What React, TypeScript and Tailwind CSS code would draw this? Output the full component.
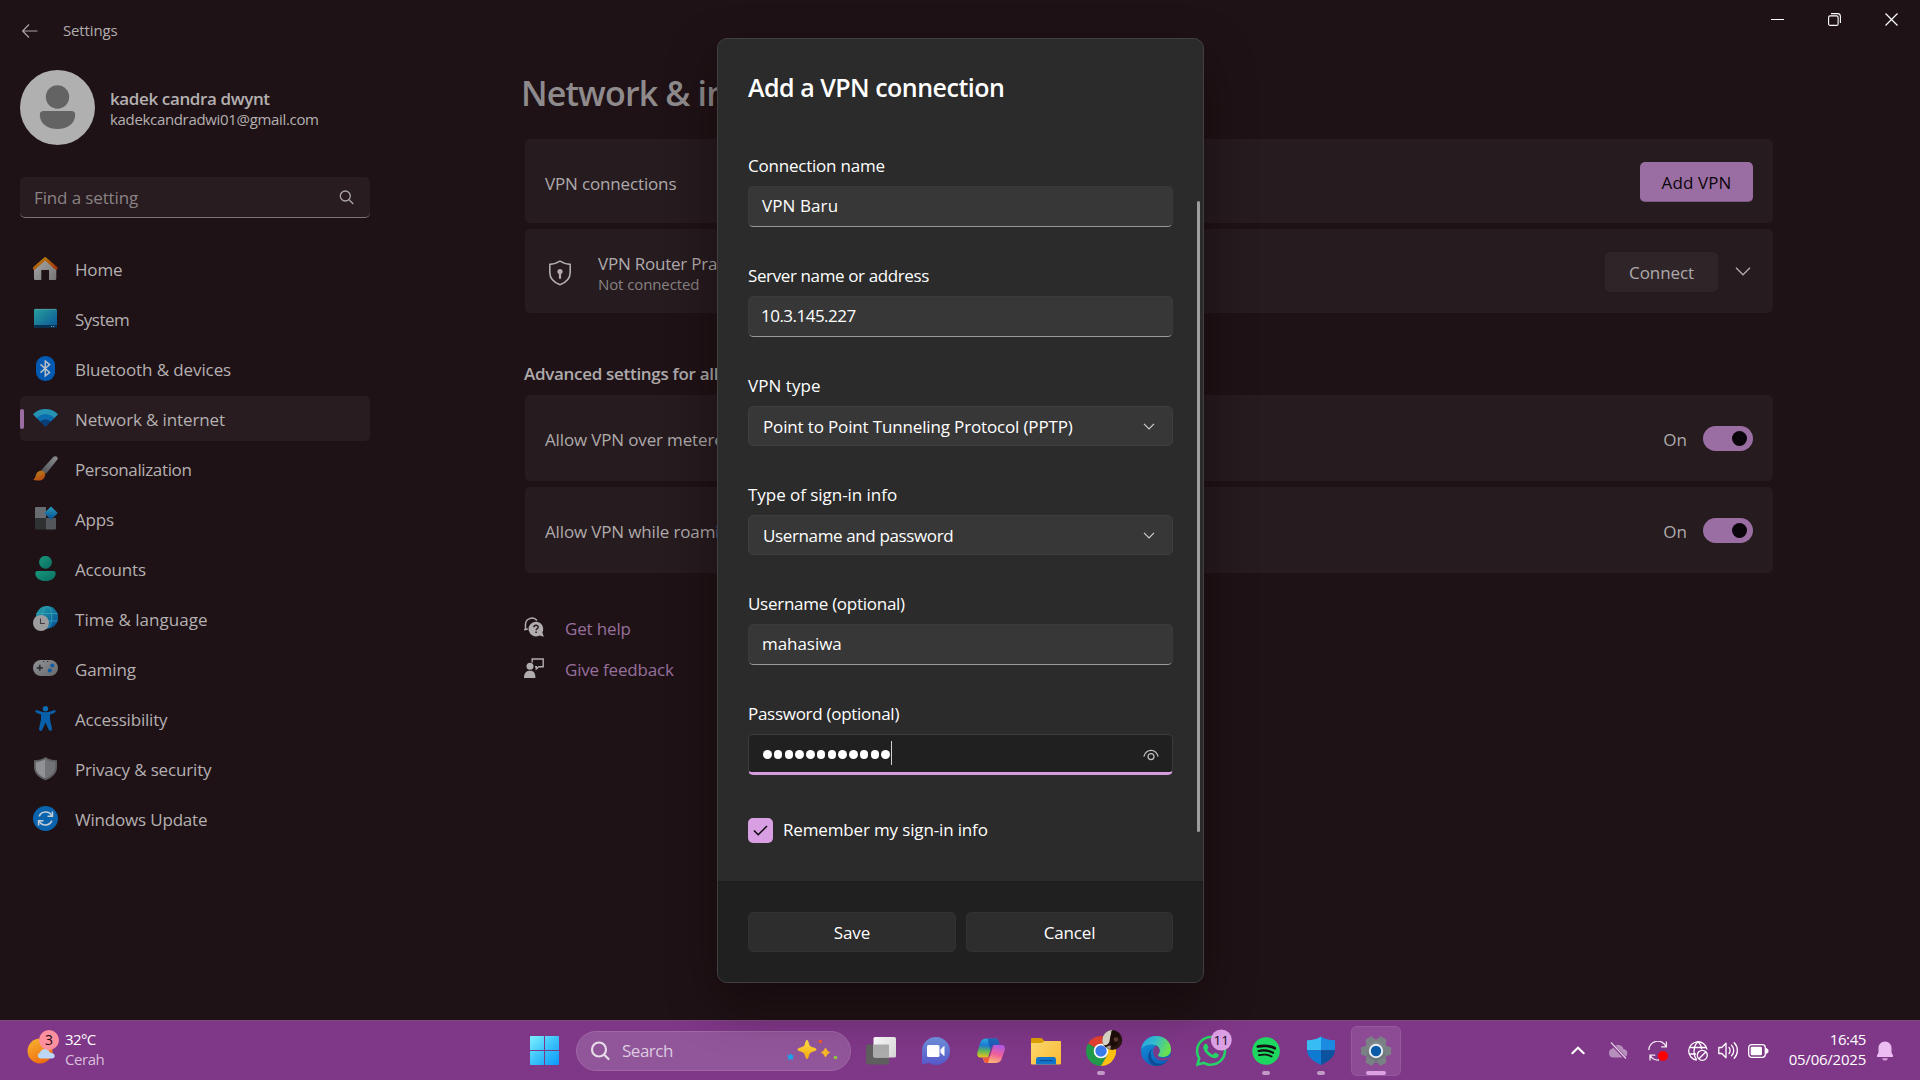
import React from "react";
import { FaWhatsapp, FaSpotify } from "react-icons/fa";

/* ---------- sidebar icons (25 × 25) ---------- */

function NavSvg({ children }: { children: React.ReactNode }) {
  return (
    <svg width="25" height="25" viewBox="0 0 25 25" className="shrink-0">
      {children}
    </svg>
  );
}

const HomeIcon = () => (
  <NavSvg>
    <defs>
      <linearGradient id="homeWall" x1="0" y1="0" x2="1" y2="1">
        <stop offset="0" stopColor="#a9a9a9" />
        <stop offset="1" stopColor="#757575" />
      </linearGradient>
      <linearGradient id="homeRoof" x1="0" y1="0" x2="1" y2="1">
        <stop offset="0" stopColor="#b8860f" />
        <stop offset="1" stopColor="#a83208" />
      </linearGradient>
    </defs>
    <path d="M1 11.5 12.3 2.5 23.3 11.5V22.8a1.2 1.2 0 0 1-1.2 1.2H16V14H8.3v10H2.2A1.2 1.2 0 0 1 1 22.8Z" fill="url(#homeWall)" />
    <path d="M1.3 12.2 12.2 2.6 23 12.2" fill="none" stroke="url(#homeRoof)" strokeWidth="3" strokeLinecap="round" strokeLinejoin="round" />
  </NavSvg>
);

const SystemIcon = () => (
  <NavSvg>
    <defs>
      <linearGradient id="sys" x1="0" y1="0" x2="1" y2="1">
        <stop offset="0" stopColor="#28a09c" />
        <stop offset="1" stopColor="#0a5296" />
      </linearGradient>
    </defs>
    <rect x="1" y="3" width="23" height="19" rx="1" fill="url(#sys)" />
    <path d="M1 19h23v2a1 1 0 0 1-1 1H2a1 1 0 0 1-1-1Z" fill="#06304f" />
    <path d="M18.2 20.5h1M20.2 20.5h1" stroke="#8fb6c9" strokeWidth="1" />
    <path d="M2 3.3h21" stroke="#6fa9ab" strokeWidth=".6" />
  </NavSvg>
);

const BluetoothIcon = () => (
  <NavSvg>
    <rect x="3" y="0" width="19" height="25" rx="9" fill="#0159b1" />
    <path d="M7.5 8.4 16.6 16.4 12.3 20V5L16.6 8.6 7.5 16.6" fill="none" stroke="#b8bfc8" strokeWidth="1.5" strokeLinejoin="miter" />
  </NavSvg>
);

const WifiIcon = () => (
  <NavSvg>
    <path d="M0 8.2A17.5 17.5 0 0 1 25 8.2L21 12.4A12 12 0 0 0 4 12.4Z" fill="#2693b5" />
    <path d="M3.6 12a12.6 12.6 0 0 1 17.8 0L17.6 15.8A7.3 7.3 0 0 0 7.4 15.8Z" fill="#0b6cae" />
    <path d="M7.2 15.6a7.6 7.6 0 0 1 10.6 0L12.5 20.9Z" fill="#083f79" />
  </NavSvg>
);

const BrushIcon = () => (
  <NavSvg>
    <defs>
      <linearGradient id="handle" x1="1" y1="0" x2="0" y2="1">
        <stop offset="0" stopColor="#8b8e92" />
        <stop offset="1" stopColor="#4d5053" />
      </linearGradient>
      <linearGradient id="tip" x1="0" y1="0" x2="0.6" y2="1">
        <stop offset="0" stopColor="#bd8b1c" />
        <stop offset="1" stopColor="#b54710" />
      </linearGradient>
    </defs>
    <path d="M8.2 14.2 20 1.2C22 -.6 25.6 .6 24.4 3.4L12.8 18Z" fill="url(#handle)" />
    <path d="M4.2 16.6c2-2.4 5.2-2.6 7-.6 1.8 2.2 1 5.8-1.6 7.4-2.8 1.7-7 1.5-9.3.1C3 22.2 2.2 19.2 4.2 16.6Z" fill="url(#tip)" />
  </NavSvg>
);

const AppsIcon = () => (
  <NavSvg>
    <defs>
      <linearGradient id="diamond" x1="0" y1="0" x2="1" y2="1">
        <stop offset="0" stopColor="#2b9cbb" />
        <stop offset="1" stopColor="#054c92" />
      </linearGradient>
    </defs>
    <path d="M3 1h10v11H2V2a1 1 0 0 1 1-1Z" fill="#686b70" />
    <path d="M2 12h11v11.5H3a1 1 0 0 1-1-1Z" fill="#2f3133" />
    <path d="M13 12h10v10.5a1 1 0 0 1-1 1h-9Z" fill="#53565a" />
    <rect x="13.2" y="2.3" width="9.6" height="9.6" rx=".8" transform="rotate(45 18 7.1)" fill="url(#diamond)" />
  </NavSvg>
);

const AccountsIcon = () => (
  <NavSvg>
    <defs>
      <linearGradient id="acc" x1="0" y1="0" x2="1" y2="1">
        <stop offset="0" stopColor="#17997d" />
        <stop offset="1" stopColor="#0a6b60" />
      </linearGradient>
    </defs>
    <circle cx="12.5" cy="6.3" r="6.4" fill="url(#acc)" />
    <path d="M4.500 15h16a2.200 2.200 0 0 1 2.200 2.200C22.700 22 18.500 25 12.500 25S2.300 22 2.300 17.200A2.200 2.200 0 0 1 4.500 15Z" fill="url(#acc)" />
  </NavSvg>
);

const TimeIcon = () => (
  <NavSvg>
    <defs>
      <linearGradient id="globe" x1="0" y1="0" x2="1" y2="1">
        <stop offset="0" stopColor="#26a3a8" />
        <stop offset="1" stopColor="#054b96" />
      </linearGradient>
    </defs>
    <circle cx="14" cy="11.3" r="11.2" fill="url(#globe)" />
    <path d="M3.5 7.5h21M3.5 15h21" stroke="#38a9bd" strokeWidth="1" opacity=".75" />
    <ellipse cx="14" cy="11.3" rx="4.8" ry="11" fill="none" stroke="#38a9bd" strokeWidth="1" opacity=".75" />
    <circle cx="8" cy="17" r="8" fill="#9d9da0" />
    <path d="M7.5 12.5v5h4.3" fill="none" stroke="#3d3d3f" strokeWidth="1.1" />
  </NavSvg>
);

const GamingIcon = () => (
  <NavSvg>
    <defs>
      <linearGradient id="pad" x1="0" y1="0" x2="1" y2="1">
        <stop offset="0" stopColor="#929498" />
        <stop offset="1" stopColor="#66696c" />
      </linearGradient>
    </defs>
    <rect x="0" y="4" width="25" height="16" rx="8" fill="url(#pad)" />
    <path d="M3.8 11.8h6M6.8 8.8v6" stroke="#303236" strokeWidth="1.7" />
    <circle cx="19.3" cy="9.5" r="2" fill="#0a5aa5" />
    <circle cx="16.8" cy="14.5" r="2" fill="#0a5aa5" />
    <path d="M10 5.5h1.3M14 5.5h1.3" stroke="#303236" strokeWidth="1.2" />
  </NavSvg>
);

const AccessIcon = () => (
  <NavSvg>
    <circle cx="12.5" cy="2.8" r="2.7" fill="#0d6bb5" />
    <path d="M3.8 4c2.5 1 5.5 2.3 8.7 2.300S18.700 5 21.200 4c1.400-.4 2 1.700.7 2.400-1.700.9-3.400 1.600-4.900 2.100v5l2 9.300c.3 2.200-2.600 2.900-3.300.9L12.500 16.500l-3.200 7.200c-.8 2-3.600 1.300-3.300-.9L8 13.500v-5C6.500 8 4.800 7.300 3.100 6.400 1.800 5.700 2.400 3.600 3.800 4Z" fill="#0860ab" />
  </NavSvg>
);

const ShieldIcon = () => (
  <NavSvg>
    <path d="M12.5 1C16 3.3 19.5 4.2 24 4.2v7c0 6-4.500 10.300-11.500 13C5.500 21.500 1 17.200 1 11.200v-7C5.500 4.200 9 3.300 12.500 1Z" fill="#5c5e61" />
    <path d="M12.5 3C9.300 4.900 6.500 5.700 2.800 5.900v5.300c0 5 3.800 8.700 9.700 11.100Z" fill="#8f9194" />
    <path d="M12.5 3c3.200 1.900 6 2.700 9.700 2.900v5.300c0 5-3.800 8.700-9.700 11.100Z" fill="#717376" />
  </NavSvg>
);

const UpdateIcon = () => (
  <NavSvg>
    <circle cx="12.5" cy="12.5" r="12.5" fill="#0a63ad" />
    <g fill="none" stroke="#c3cdd6" strokeWidth="1.6">
      <path d="M6.2 10.4A6.9 6.9 0 0 1 18.800 9.800" />
      <path d="M19.4 5.4v4.900h-4.900" />
      <path d="M18.800 14.600A6.900 6.900 0 0 1 6.200 15.200" />
      <path d="M5.600 19.600v-4.900h4.900" />
    </g>
  </NavSvg>
);

const nav: { label: string; track: string; icon: React.ReactNode; active?: boolean }[] = [
  { label: "Home", track: "tracking-[-0.17px]", icon: <HomeIcon /> },
  { label: "System", track: "tracking-[-0.5px]", icon: <SystemIcon /> },
  { label: "Bluetooth & devices", track: "tracking-[-0.1px]", icon: <BluetoothIcon /> },
  { label: "Network & internet", track: "tracking-[-0.13px]", icon: <WifiIcon />, active: true },
  { label: "Personalization", track: "tracking-[-0.36px]", icon: <BrushIcon /> },
  { label: "Apps", track: "tracking-[-0.18px]", icon: <AppsIcon /> },
  { label: "Accounts", track: "tracking-[-0.17px]", icon: <AccountsIcon /> },
  { label: "Time & language", track: "tracking-[0.02px]", icon: <TimeIcon /> },
  { label: "Gaming", track: "tracking-[-0.1px]", icon: <GamingIcon /> },
  { label: "Accessibility", track: "tracking-[-0.2px]", icon: <AccessIcon /> },
  { label: "Privacy & security", track: "tracking-[-0.16px]", icon: <ShieldIcon /> },
  { label: "Windows Update", track: "tracking-[-0.19px]", icon: <UpdateIcon /> },
];

function TitleBar() {
  return (
    <header className="flex h-[62px] items-start justify-between">
      <div className="flex h-[62px] items-center pl-[22px] text-[15px] tracking-[-0.14px] text-[#b1adae]">
        <svg width="16" height="14" viewBox="0 0 16 14" className="mr-[25px]" fill="none" stroke="#a5a2a3" strokeWidth="1.2">
          <path d="M15.5 7H.8M7 .5.7 7 7 13.5" />
        </svg>
        <span className="pb-[2px]">Settings</span>
      </div>
      <div className="flex h-[38px] w-[171px] items-center">
        <div className="flex w-[57px] justify-center">
          <span className="h-px w-[13px] bg-white" />
        </div>
        <div className="flex w-[57px] justify-center">
          <svg width="13" height="13" viewBox="0 0 13 13" fill="none" stroke="#fff" strokeWidth="1.1">
            <rect x=".6" y="2.9" width="9.5" height="9.5" rx="1.5" />
            <path d="M3 .6h6.5a2.900 2.900 0 0 1 2.900 2.900V10" />
          </svg>
        </div>
        <div className="flex w-[57px] justify-center">
          <svg width="13" height="13" viewBox="0 0 13 13" stroke="#fff" strokeWidth="1.2">
            <path d="m.5.5 12 12M12.500.5l-12 12" />
          </svg>
        </div>
      </div>
    </header>
  );
}

function Sidebar() {
  return (
    <aside className="w-[522px] shrink-0 pl-5 pt-2">
      <div className="flex h-[75px] items-start">
        <svg width="75" height="75" viewBox="0 0 75 75">
          <circle cx="37.5" cy="37.5" r="37.5" fill="#b0b0b0" />
          <circle cx="37.5" cy="27" r="11.7" fill="#636363" />
          <path d="M23.500 41h28a3.700 3.700 0 0 1 3.700 3.700C55.200 53 48 59 37.500 59S19.800 53 19.800 44.700A3.700 3.700 0 0 1 23.500 41Z" fill="#636363" />
        </svg>
        <div className="pl-[15px] pt-[18px] text-[#b4b0b1]">
          <div className="text-[17px] font-semibold leading-[22px] tracking-[-0.38px]">kadek candra dwynt</div>
          <div className="-mt-px text-[15px] leading-[20px] tracking-[-0.33px]">kadekcandradwi01@gmail.com</div>
        </div>
      </div>
      <div className="mt-8 flex h-[41px] w-[350px] items-center justify-between rounded-[5px] border-b border-[#7c7476] bg-[#281c20] pl-[14px] pr-4 tracking-[-0.13px] text-[#8a8284]">
        <span className="pt-[2px]">Find a setting</span>
        <svg width="15" height="15" viewBox="0 0 15 15" fill="none" stroke="#aaa6a7" strokeWidth="1.3">
          <circle cx="6.3" cy="6" r="5" />
          <path d="m10 9.700 4.300 4.300" />
        </svg>
      </div>
      <nav className="mt-7 flex w-[350px] flex-col gap-[5px]">
        {nav.map((n) => (
          <div key={n.label} className={`relative flex h-[45px] items-center rounded-[5px] pl-[13px] ${n.active ? "bg-[#281c20]" : ""}`}>
            {n.active && <span className="absolute left-0 top-[13px] h-5 w-1 rounded-full bg-[#9b6ea3]" />}
            {n.icon}
            <span className={`pl-[17px] pt-[2px] leading-6 text-[#b4b0b1] ${n.track}`}>{n.label}</span>
          </div>
        ))}
      </nav>
    </aside>
  );
}

function Toggle() {
  return (
    <span className="flex h-[25px] w-[50px] items-center justify-end rounded-full bg-[#9b6ea3] pr-[6px]">
      <span className="size-[15px] rounded-full bg-[#0a050a]" />
    </span>
  );
}

function ToggleCard({ label, track }: { label: string; track: string }) {
  return (
    <div className="flex h-[86px] items-center justify-between rounded-[5px] bg-[#261b1f] pl-5 pr-5 pt-px">
      <span className={`pt-[2px] ${track}`}>{label}</span>
      <div className="flex items-center gap-4">
        <span className="pt-[2px]">On</span>
        <Toggle />
      </div>
    </div>
  );
}

function Main() {
  return (
    <main className="flex w-[1251px] flex-col pt-2 text-[#aeaaab]">
      <h1 className="-ml-px h-[46px] text-[34px] font-semibold leading-[46px] tracking-[-0.85px] text-[#8f8b8c]">Network &amp; in</h1>
      <div className="ml-[4px] mt-[23px] flex flex-col gap-[6px] -mr-px pr-px">
        <div className="-ml-px flex h-[84px] items-center justify-between rounded-[5px] bg-[#261b1f] px-5">
          <span className="pt-[5px] tracking-[-0.15px]">VPN connections</span>
          <div className="mt-[2px] flex h-10 w-[113px] items-center justify-center rounded-[5px] border-b border-[#7d5c84] bg-[#9b6ea3] pt-[2px] tracking-[0.1px] text-[#0a050a]">
            Add VPN
          </div>
        </div>
        <div className="-ml-px flex h-[84px] items-center justify-between rounded-[5px] bg-[#261b1f] px-5">
          <div className="flex items-center">
            <svg width="24" height="26" viewBox="0 0 24 26" className="ml-[3px] mt-[3px]" fill="none" stroke="#b1adae" strokeWidth="1.6">
              <path d="M12 1.200c3.200 2.200 6.300 3 10.200 3.200v8.100c0 6-3.600 9.700-10.200 12.300C5.400 22.200 1.800 18.500 1.800 12.500V4.400C5.700 4.200 8.800 3.400 12 1.200Z" strokeLinejoin="round" />
              <circle cx="12" cy="11.5" r="2.6" fill="#b1adae" stroke="none" />
              <path d="M12 12v6" strokeWidth="2.2" strokeLinecap="round" />
            </svg>
            <div className="pl-[26px] pt-[6px]">
              <div className="leading-[21px] tracking-[-0.22px]">VPN Router Pra</div>
              <div className="text-[15px] leading-[21px] tracking-[-0.1px] text-[#888384]">Not connected</div>
            </div>
          </div>
          <div className="mt-[2px] flex items-center gap-[17px] pr-[2px]">
            <div className="flex h-10 w-[113px] items-center justify-center rounded-[5px] bg-[#2f2529] pt-[2px] tracking-[-0.1px]">Connect</div>
            <svg width="16" height="9" viewBox="0 0 16 9" fill="none" stroke="#b1adae" strokeWidth="1.3" className="-mt-[2px]">
              <path d="m1 .8 7 7 7-7" />
            </svg>
          </div>
        </div>
      </div>
      <h2 className="ml-[2px] mt-[49px] text-[17px] font-semibold leading-6 tracking-[-0.3px]">Advanced settings for all</h2>
      <div className="ml-[3px] mt-[9px] flex flex-col gap-[6px]">
        <ToggleCard label="Allow VPN over metere" track="tracking-[-0.15px]" />
        <ToggleCard label="Allow VPN while roami" track="tracking-[-0.15px]" />
      </div>
      <div className="ml-[2px] mt-[42px] flex flex-col gap-[17px] text-[#96709c]">
        <div className="flex h-6 items-center">
          <svg width="20" height="20" viewBox="0 0 20 20" className="shrink-0">
            <path d="M1.500 12V8A6.500 6.500 0 0 1 13 3.500M0 12.800 3.800 12" fill="none" stroke="#b1adae" strokeWidth="1.500" />
            <path d="M12 4.800a7.300 7.300 0 0 1 6.400 10.700l1.400 4.300-4.400-1.300A7.300 7.300 0 1 1 12 4.800Z" fill="#b1adae" />
            <path d="M9.900 10.300c0-2.700 4.300-2.600 4.300-.2 0 1.600-2.100 1.700-2.100 3.200M12.100 14.500v1.500" fill="none" stroke="#1f1216" strokeWidth="1.400" />
          </svg>
          <span className="pl-[21px] pt-[3px] tracking-[-0.16px]">Get help</span>
        </div>
        <div className="flex h-6 items-center">
          <svg width="20" height="20" viewBox="0 0 20 20" className="shrink-0">
            <circle cx="6" cy="8.300" r="3.500" fill="#b1adae" />
            <path d="M0 20c0-4.500 1.800-7.200 6-7.200s5.400 2.700 5.400 7.200Z" fill="#b1adae" />
            <path d="M8.200 4.500V1h11v7.800h-4.400L12.300 11V8.800h-1.300" fill="none" stroke="#b1adae" strokeWidth="1.400" />
          </svg>
          <span className="pl-[21px] pt-[3px] tracking-[-0.2px]">Give feedback</span>
        </div>
      </div>
    </main>
  );
}

/* ---------- dialog ---------- */

function Field({ label, track, children }: { label: string; track: string; children: React.ReactNode }) {
  return (
    <div className="flex flex-col gap-2">
      <label className={`leading-6 ${track}`}>{label}</label>
      {children}
    </div>
  );
}

function TextBox({ value, track }: { value: string; track: string }) {
  return (
    <div className="flex h-[41px] items-center rounded-[5px] border border-[#3b3b3b] border-b-[#9a9a9a] bg-[#373737] pl-[13px]">
      <span className={`pb-[2px] ${track}`}>{value}</span>
    </div>
  );
}

function Combo({ value, track }: { value: string; track: string }) {
  return (
    <div className="flex h-[40px] items-center justify-between rounded-[5px] border border-[#3e3e3e] bg-[#373737] pl-[14px] pr-[17px]">
      <span className={`pt-[2px] ${track}`}>{value}</span>
      <svg width="12" height="7" viewBox="0 0 12 7" fill="none" stroke="#cfcfcf" strokeWidth="1.2">
        <path d="m1 .8 5 5 5-5" />
      </svg>
    </div>
  );
}

function VpnDialog() {
  return (
    <section className="absolute left-[717px] top-[38px] flex h-[945px] w-[487px] flex-col overflow-hidden rounded-[10px] border border-[#423f40] bg-[#2b2b2b] text-white shadow-[0_20px_50px_rgba(10,0,5,0.45)]">
      <div className="h-[842px] px-[30px] pt-[31px]">
        <h3 className="mb-[50px] text-[25px] font-semibold leading-[34px] tracking-[-0.5px]">Add a VPN connection</h3>
        <div className="flex flex-col gap-[37px]">
          <Field label="Connection name" track="tracking-[-0.22px]">
            <TextBox value="VPN Baru" track="tracking-[0.1px]" />
          </Field>
          <Field label="Server name or address" track="tracking-[-0.38px]">
            <TextBox value="10.3.145.227" track="-ml-px tracking-[-0.52px]" />
          </Field>
          <Field label="VPN type" track="tracking-[0.06px]">
            <Combo value="Point to Point Tunneling Protocol (PPTP)" track="tracking-[-0.15px]" />
          </Field>
          <Field label="Type of sign-in info" track="tracking-[-0.04px]">
            <Combo value="Username and password" track="tracking-[-0.37px]" />
          </Field>
          <Field label="Username (optional)" track="tracking-[-0.27px]">
            <TextBox value="mahasiwa" track="tracking-[-0.05px]" />
          </Field>
          <Field label="Password (optional)" track="tracking-[-0.28px]">
            <div className="flex h-[41px] items-center justify-between rounded-[5px] border border-[#3b3b3b] border-b-[3px] border-b-[#d79be0] bg-[#202020] pl-[14px] pr-[13px]">
              <div className="flex items-center gap-[2.26px] pt-[2px]">
                {Array.from({ length: 12 }, (_, i) => (
                  <span key={i} className="size-[8.5px] rounded-full bg-white" />
                ))}
                <span className="-ml-px -mt-[3px] h-6 w-px bg-[#d0d0d0]" />
              </div>
              <svg width="16" height="12" viewBox="0 0 16 12" fill="none" stroke="#c4c4c4" strokeWidth="1.2" className="mt-[2px]">
                <path d="M.8 7.5C3.300-.8 12.700-.8 15.200 7.500" />
                <circle cx="8" cy="7.6" r="3" />
              </svg>
            </div>
          </Field>
        </div>
        <div className="mt-[43px] flex h-[25px] items-center">
          <span className="flex size-[25px] items-center justify-center rounded-[5px] bg-[#d99fe3]">
            <svg width="15" height="11" viewBox="0 0 15 11" fill="none" stroke="#0b050c" strokeWidth="1.5">
              <path d="m1 5.5 4.200 4.300L14 1" />
            </svg>
          </span>
          <span className="pb-px pl-[10px] tracking-[-0.15px]">Remember my sign-in info</span>
        </div>
      </div>
      <div className="flex flex-1 gap-[10px] border-t border-[#1c1c1c] bg-[#202020] px-[30px] pt-[30px]">
        <div className="flex h-10 w-[208px] items-center justify-center rounded-[5px] border border-[#323232] bg-[#2d2d2d] pt-[2px] tracking-[-0.09px]">Save</div>
        <div className="flex h-10 w-[207px] items-center justify-center rounded-[5px] border border-[#323232] bg-[#2d2d2d] pt-[2px] tracking-[-0.15px]">Cancel</div>
      </div>
      <span className="absolute right-[3px] top-[162px] h-[631px] w-[3px] rounded-full bg-[#9d9d9d]" />
    </section>
  );
}

/* ---------- taskbar ---------- */

function Slot({ children }: { children: React.ReactNode }) {
  return (
    <svg width="55" height="60" viewBox="0 0 55 60" className="shrink-0">
      {children}
    </svg>
  );
}

const Running = () => <rect x="24" y="50" width="8" height="4" rx="2" fill="#c39ac7" />;

function TaskIcons() {
  return (
    <div className="flex">
      <Slot>
        <defs>
          <linearGradient id="tv" x1="0" y1="0" x2="1" y2="1">
            <stop offset="0" stopColor="#fff" />
            <stop offset="1" stopColor="#d5d5d5" />
          </linearGradient>
        </defs>
        <rect x="13" y="23.5" width="23" height="20" rx="1.5" fill="#5f5f5f" />
        <rect x="20.5" y="16" width="22.5" height="20.5" rx="1.5" fill="url(#tv)" />
        <path d="M20.500 23.500h14.500a1 1 0 0 1 1 1v12H21.500a1 1 0 0 1-1-1Z" fill="#adadad" />
      </Slot>
      <Slot>
        <defs>
          <linearGradient id="chat" x1="0" y1="0" x2="0" y2="1">
            <stop offset="0" stopColor="#6f92dd" />
            <stop offset="1" stopColor="#5557c8" />
          </linearGradient>
        </defs>
        <path d="M28 16a14 14 0 1 1-7 26.100L14 43.500V30A14 14 0 0 1 28 16Z" fill="url(#chat)" />
        <rect x="19" y="24" width="12.5" height="12" rx="1.5" fill="#fff" />
        <path d="M33 28.500 36 25.500v9L33 31.500Z" fill="#fff" stroke="#fff" strokeLinejoin="round" />
      </Slot>
      <Slot>
        <defs>
          <linearGradient id="cpA" x1="0.3" y1="0" x2="0.2" y2="1">
            <stop offset="0" stopColor="#28b3e6" />
            <stop offset=".35" stopColor="#1f7ad8" />
            <stop offset=".65" stopColor="#5fb85a" />
            <stop offset="1" stopColor="#f0c419" />
          </linearGradient>
          <linearGradient id="cpB" x1="0.7" y1="0" x2="0.4" y2="1">
            <stop offset="0" stopColor="#b05bea" />
            <stop offset=".5" stopColor="#f0609c" />
            <stop offset="1" stopColor="#fdbb74" />
          </linearGradient>
        </defs>
        <path d="M24 17.500h8c2.200 0 3 1.200 3.500 3l1 3h-4.500c-2 0-3 1-3.500 3l-3.500 10h-7c-3 0-4.300-2-3.600-5l2.600-9c1-3.300 3-5 7-5Z" fill="url(#cpA)" />
        <path d="M24.500 17.500h7.500c2.200 0 3 1.200 3.500 3l1 3h-4.500c-2 0-3 1-3.500 3l-1 3Z" fill="#1b4fae" opacity=".75" />
        <path d="M32 42h-8c-2.200 0-3-1.200-3.500-3l-.8-2.500H24c2 0 3-1 3.500-3l3-9.500h7.500c3.300 0 4.500 2 3.700 5l-2.700 8c-1 3.300-3 5-7 5Z" fill="url(#cpB)" />
        <path d="M20 36.500h4c1.500 0 2.500-.6 3.200-2L25 42c-3 0-4-1-5-5.500Z" fill="#ee5a3c" />
      </Slot>
      <Slot>
        <defs>
          <linearGradient id="fold" x1="0" y1="0" x2="1" y2="1">
            <stop offset="0" stopColor="#ffdd73" />
            <stop offset="1" stopColor="#fbb92f" />
          </linearGradient>
        </defs>
        <path d="M14 17h9.500l3 3H41a1.500 1.500 0 0 1 1.500 1.500V30H13V18a1 1 0 0 1 1-1Z" fill="#e0a006" />
        <path d="M13 22h10.500l3.200-2H42a1 1 0 0 1 1 1v21.500a1 1 0 0 1-1 1H14a1 1 0 0 1-1-1Z" fill="url(#fold)" />
        <path d="M18 43.500V38.500a2.500 2.500 0 0 1 2.500-2.500h15A2.500 2.500 0 0 1 38 38.500v5Z" fill="#1276cc" />
        <path d="M22 39.700h12.500" stroke="#0b4f98" strokeWidth="1.3" strokeLinecap="round" />
      </Slot>
      <Slot>
        <path d="M28 30 15 22.500A15 15 0 0 1 41 22.500H28Z" fill="#e5402f" />
        <path d="M28 30 15.010 22.500A15 15 0 0 0 28 45L34.500 33.750Z" fill="#229a4b" />
        <path d="M28 22.500H41A15 15 0 0 1 28 45L34.500 33.750Z" fill="#fdc10f" />
        <circle cx="28" cy="30" r="7.3" fill="#fff" />
        <circle cx="28" cy="30" r="5.7" fill="#3a7cec" />
        <circle cx="39.3" cy="19" r="10" fill="#2a1613" />
        <path d="M39.300 9A10 10 0 0 0 29.300 19c0 2 .6 3.500 1.500 5 2.500.5 4.500-.5 5.500-3 .5-4 1.500-8 3-12Z" fill="#dcd6ca" />
        <path d="M38.500 10c4-1 8 2 8.500 6l-3 8-5 2-2-5Z" fill="#1c0c0a" />
        <circle cx="43" cy="18.500" r="2.300" fill="#5b3a31" />
        <path d="M33 26.500c1.500-1.500 3.500-2 5-1.500l-1 3.500Z" fill="#a89c92" />
        <Running />
      </Slot>
      <Slot>
        <defs>
          <linearGradient id="edA" x1="0" y1="0" x2="1" y2="0.3">
            <stop offset="0" stopColor="#2aa4e4" />
            <stop offset=".5" stopColor="#35c1d2" />
            <stop offset="1" stopColor="#6be24f" />
          </linearGradient>
          <linearGradient id="edB" x1="0" y1="0" x2="0.4" y2="1">
            <stop offset="0" stopColor="#1b9de2" />
            <stop offset="1" stopColor="#0a62bb" />
          </linearGradient>
        </defs>
        <circle cx="28" cy="30" r="15" fill="url(#edB)" />
        <path d="M25 27c-4 4-3 12 4 15.500 5 1.500 9-.5 12-4.500A15 15 0 0 1 28 45c-8-1-11-12-3-18Z" fill="#0e4c94" />
        <path d="M13.200 28C14.500 20 21 15 28 15c9 0 15 6 15 13.500 0 5-4 7.500-8.500 7.500-3 0-4.500-1-4.500-2 0-1.200 1.700-1.500 1.700-4.500 0-3-3-6-7.700-6-5 0-9 2-10.800 4.500Z" fill="url(#edA)" />
        <path d="M30 34c0-1.200 1.700-1.500 1.700-4.500 0-2-1.300-3.800-3.400-4.900-4.500 2.400-4.300 9.900.7 13.400 4 2.500 9.500 1.500 12.800-.3.700-.8.300-1.400-.3-2.300-1.900 1.300-4.200 1.600-7 1.600-3 0-4.500-1-4.500-3Z" fill="#7d3a88" />
      </Slot>
      <Slot>
        <FaWhatsapp x="10.5" y="12.5" size={35} color="#25d366" />
        <circle cx="38.3" cy="19" r="10.5" fill="#dca0e4" />
        <text x="38.3" y="24" textAnchor="middle" fontSize="13.5" fill="#1a0b1c" fontFamily="Open Sans">11</text>
      </Slot>
      <Slot>
        <circle cx="28" cy="30" r="13" fill="#121212" />
        <FaSpotify x="13.8" y="15.8" size={28.5} color="#1ed760" />
        <Running />
      </Slot>
      <Slot>
        <path d="M28 15.500c4 2.600 8 3.800 14 3.800v10H28Z" fill="#1a8be0" />
        <path d="M28 15.500c-4 2.600-8 3.800-14 3.800v10h14Z" fill="#38bdf2" />
        <path d="M14 29.300h14V44c-8-3.500-13.500-8-14-14.700Z" fill="#0f7ad1" />
        <path d="M42 29.300H28V44c8-3.500 13.500-8 14-14.700Z" fill="#0c539f" />
        <Running />
      </Slot>
      <Slot>
        <defs>
          <linearGradient id="gear" x1="0" y1="15" x2="0" y2="45" gradientUnits="userSpaceOnUse">
            <stop offset="0" stopColor="#8d9498" />
            <stop offset="1" stopColor="#60686d" />
          </linearGradient>
        </defs>
        <rect x="3.500" y="5.500" width="49" height="49" rx="5" fill="#8d4a95" stroke="#97599e" />
        <circle cx="28" cy="30" r="11.5" fill="url(#gear)" />
        {[0, 60, 120, 180, 240, 300].map((a) => (
          <path key={a} d="M37 24.500 42.500 26.300a1 1 0 0 1 .6 1v5.400a1 1 0 0 1-.6 1L37 35.500Z" transform={`rotate(${a} 28 30)`} fill="#7a8185" />
        ))}
        <circle cx="28" cy="30" r="7.2" fill="#e9eef2" />
        <circle cx="28" cy="30" r="5.2" fill="#0b5aa8" />
        <rect x="18" y="50" width="20" height="4" rx="2" fill="#dca0e4" />
      </Slot>
    </div>
  );
}

function Taskbar() {
  return (
    <footer className="flex h-[60px] items-center border-t border-[#7d4a80] bg-[#7f3787] text-white">
      <div className="flex w-[530px] items-center pl-[27px]">
        <svg width="34" height="40" viewBox="0 0 34 40" className="-mt-px">
          <defs>
            <linearGradient id="sun" x1="0" y1="0" x2="0.5" y2="1">
              <stop offset="0" stopColor="#f7b733" />
              <stop offset="1" stopColor="#f06f10" />
            </linearGradient>
          </defs>
          <circle cx="13" cy="21" r="12.5" fill="url(#sun)" />
          <path d="M13 28.500a3 3 0 0 1 0-5.800c1-4.500 8-5.500 10 0 5.500-.5 6.500 5.800 1.500 5.800Z" fill="#bcd6f7" />
          <circle cx="22" cy="10" r="10" fill="#fd8f9f" />
          <text x="22" y="15" textAnchor="middle" fontSize="14" fill="#1c0a10" fontFamily="Open Sans">3</text>
        </svg>
        <div className="-mt-[3px] pl-1 text-[15px] leading-5">
          <div className="tracking-[-0.6px]">32°C</div>
          <div className="tracking-[-0.45px] text-[#d9bfdc]">Cerah</div>
        </div>
      </div>
      <svg width="29" height="29" viewBox="0 0 29 29">
        <defs>
          <linearGradient id="win" x1="0" y1="0" x2="29" y2="29" gradientUnits="userSpaceOnUse">
            <stop offset="0" stopColor="#7df3ff" />
            <stop offset=".5" stopColor="#3cc2fa" />
            <stop offset="1" stopColor="#0a98fa" />
          </linearGradient>
        </defs>
        <path d="M1 0h13v14H0V1a1 1 0 0 1 1-1ZM15 0h13a1 1 0 0 1 1 1v13H15ZM0 15h14v14H1a1 1 0 0 1-1-1ZM15 15h14v13a1 1 0 0 1-1 1H15Z" fill="url(#win)" />
      </svg>
      <div className="ml-[17px] mr-[2px] flex h-10 w-[275px] items-center rounded-full border border-[#a067a6] bg-[#91569a] pl-[13px] pr-[11px]">
        <svg width="20" height="20" viewBox="0 0 20 20" fill="none" stroke="#e6dce8" strokeWidth="2.2" strokeLinecap="round">
          <circle cx="9" cy="8.5" r="7" />
          <path d="m14.200 13.700 4.300 4.300" />
        </svg>
        <span className="pl-3 tracking-[-0.48px] text-[#dccbe0]">Search</span>
        <svg width="54" height="24" viewBox="0 0 54 24" className="-mt-px ml-auto">
          <defs>
            <linearGradient id="star" x1="0" y1="0" x2="0" y2="1">
              <stop offset="0" stopColor="#ffe04a" />
              <stop offset="1" stopColor="#f7a90a" />
            </linearGradient>
          </defs>
          <path d="M22 2c1 0 1.300 1 1.700 2.500.9 3.500 1.500 4.100 5 5.100 1.300.4 2.800.8 2.800 1.900s-1.500 1.500-2.800 1.900c-3.500 1-4.100 1.600-5 5.100C23.300 20 23 21 22 21s-1.300-1-1.700-2.500c-.9-3.500-1.500-4.100-5-5.100-1.300-.4-2.800-.8-2.800-1.900s1.500-1.500 2.800-1.900c3.500-1 4.100-1.600 5-5.100C20.700 3 21 2 22 2Z" fill="url(#star)" />
          <path d="M40.500 10c.8 0 .9 3.200 4.500 4.500-3.600 1.300-3.700 4.500-4.500 4.500s-.9-3.200-4.500-4.500c3.600-1.300 3.700-4.500 4.500-4.500Z" fill="#f9b729" stroke="#f9b729" strokeWidth=".5" />
          <path d="M5.500 15l1.300 2.300 2.600.3-1.800 1.900.5 2.500-2.600-1-2.400 1.200.3-2.700-1.600-2 2.500-.3Z" fill="#1aa5ee" />
          <circle cx="35.3" cy="3.5" r="1.8" fill="#f0582a" />
          <circle cx="50.5" cy="19.5" r="1.8" fill="#8fc93a" />
        </svg>
      </div>
      <TaskIcons />
      <div className="ml-auto flex items-center">
        <svg width="14" height="9" viewBox="0 0 14 9" fill="none" stroke="#fff" strokeWidth="2" strokeLinecap="round">
          <path d="M1.300 7.300 7 1.700l5.700 5.600" />
        </svg>
        <svg width="20" height="18" viewBox="0 0 20 18" className="ml-[23px]">
          <path d="M5 15.500a4.500 4.500 0 0 1-.3-8.900A5.700 5.700 0 0 1 15.500 7a4.300 4.300 0 0 1 .3 8.500Z" fill="#b78fbc" />
          <path d="m3 1 15 16" stroke="#7f3787" strokeWidth="3" />
          <path d="m3 .5 15 16" stroke="#e2d0e4" strokeWidth="1.2" />
        </svg>
        <svg width="20" height="20" viewBox="0 0 20 20" className="ml-5" fill="none" stroke="#f1e6f2" strokeWidth="1.3">
          <path d="M.8 9A9 9 0 0 1 18 5.500M18.400 .5v5.300h-5.300M2 19.500v-5.300h5.300M2.300 14.500A9 9 0 0 0 11 19" />
          <circle cx="15" cy="15" r="5" fill="#fe0000" stroke="none" />
        </svg>
        <svg width="20" height="20" viewBox="0 0 20 20" className="ml-5" fill="none" stroke="#fff" strokeWidth="1.3">
          <path d="M19 8.500A9.200 9.200 0 1 0 8.800 19.100" />
          <path d="M8.500 18.500C5 14 5 5.500 9.800.8c2.600 2.300 3.800 5 3.900 7.500M1.500 6.500h16.800M1 13h7" />
          <circle cx="14.3" cy="14.3" r="5" />
          <path d="m11 17.700 6.700-6.700" />
        </svg>
        <svg width="20" height="19" viewBox="0 0 20 19" className="ml-[10px]" fill="none" stroke="#fff" strokeWidth="1.3" strokeLinecap="round" strokeLinejoin="round">
          <path d="M.8 6.500h3L8 2.300v14.400L3.800 12.500h-3Z" />
          <path d="M11 6.500c1.500 1.500 1.500 4.500 0 6M13.500 4.200c3 2.800 3 7.800 0 10.600M16.200 1.800c4.200 4.200 4.200 11.200 0 15.400" />
        </svg>
        <svg width="21" height="14" viewBox="0 0 21 14" className="ml-[10px]">
          <rect x=".7" y=".7" width="16.6" height="12.6" rx="3" fill="none" stroke="#fff" strokeWidth="1.3" />
          <rect x="2.7" y="2.7" width="11.3" height="8.6" rx="1.2" fill="#fff" />
          <path d="M18.500 4.500c2 .5 2 4.500 0 5Z" fill="#fff" stroke="#fff" />
        </svg>
        <div className="-mt-[3px] w-[97px] text-right text-[15px] leading-5">
          <div className="tracking-[-0.4px]">16:45</div>
          <div className="tracking-[-0.23px]">05/06/2025</div>
        </div>
        <svg width="18" height="20" viewBox="0 0 18 20" className="ml-[10px] mr-[26px]" fill="#ecbdf2">
          <path d="M9 .5c4 0 6.500 3 6.500 6.500v4.500l1.500 3c.3.800 0 1.500-1 1.500H2c-1 0-1.300-.7-1-1.500l1.500-3V7C2.500 3.500 5 .5 9 .5Z" />
          <path d="M6 17.200h6c-.5 1.700-1.600 2.300-3 2.300s-2.500-.6-3-2.300Z" opacity=".8" />
        </svg>
      </div>
    </footer>
  );
}

export default function App() {
  return (
    <div className="relative flex h-[1080px] w-[1920px] flex-col overflow-hidden bg-[#1f1216] font-['Open_Sans',sans-serif] text-[17px] leading-6">
      <TitleBar />
      <div className="flex h-[958px]">
        <Sidebar />
        <Main />
      </div>
      <Taskbar />
      <VpnDialog />
    </div>
  );
}
